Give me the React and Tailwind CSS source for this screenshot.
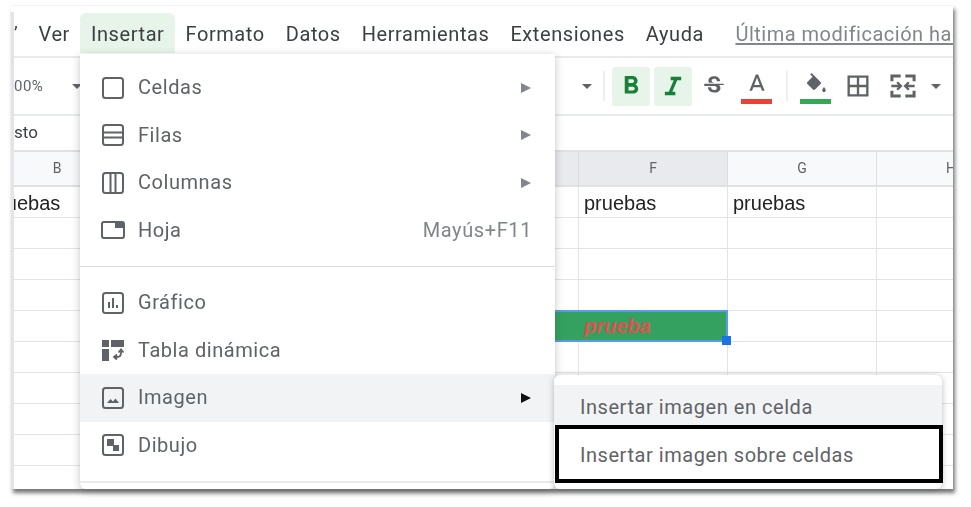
const menus = ['Ver', 'Insertar', 'Formato', 'Datos', 'Herramientas', 'Extensiones', 'Ayuda']
const columns = ['B', 'C', 'D', 'E', 'F', 'G', 'H']

const Icon = ({ children, className = 'w-6 h-6', fill = 'none' }) => (
  <svg viewBox="0 0 24 24" fill={fill} stroke={fill === 'none' ? '#5f6368' : 'none'} strokeWidth="2" className={className}>
    {children}
  </svg>
)

const menuGroups = [
  [
    { label: 'Celdas', arrow: true, icon: <rect x="2" y="2" width="20" height="20" rx="2.5" /> },
    { label: 'Filas', arrow: true, icon: <><rect x="2" y="2" width="20" height="20" rx="2.5" /><path d="M2 9.500h20M2 14.500h20" /></> },
    { label: 'Columnas', arrow: true, icon: <><rect x="2" y="2" width="20" height="20" rx="2.5" /><path d="M9.500 2v20M14.500 2v20" /></> },
    {
      label: 'Hoja',
      shortcut: 'Mayús+F11',
      icon: <><rect x="1" y="4" width="22" height="16" rx="2" /><path d="M14 4h9v6h-9z" fill="#5f6368" stroke="none" /></>,
    },
  ],
  [
    {
      label: 'Gráfico',
      icon: <><rect x="2" y="2" width="20" height="20" rx="2.5" /><path d="M8 11v6M12 7v10M16 14v3" /></>,
    },
    {
      label: 'Tabla dinámica',
      icon: (
        <>
          <path d="M1 2h7v7H1zM10 2h13v7H10zM1 11h7v12H1z" fill="#5f6368" stroke="none" />
          <path d="M20 13v2c0 3-1.500 4-4 4h-2" strokeWidth="1.8" />
          <path d="M17.500 14.500 20 11.500l2.500 3M16 16.500 13 19l3 2.500" strokeWidth="1.8" />
        </>
      ),
    },
    {
      label: 'Imagen',
      arrow: true,
      dark: true,
      active: true,
      icon: <><rect x="2" y="2" width="20" height="20" rx="2.5" /><path d="M6 17l3.500-4 2.500 2.500 2.500-3L18 17z" fill="#5f6368" stroke="none" /></>,
    },
    {
      label: 'Dibujo',
      icon: <><rect x="2" y="2" width="20" height="20" rx="2.5" /><path d="M6 6h7v7H6zM12 12h6v6h-6z" fill="#5f6368" stroke="none" /></>,
    },
  ],
]

function MenuRow({ item }) {
  return (
    <div className={`flex h-[47.5px] items-center pl-[21px] pr-[21px] ${item.active ? 'bg-[#f1f3f4]' : ''}`}>
      <Icon className="h-[24px] w-[24px] shrink-0">{item.icon}</Icon>
      <span className="ml-[13px] -mt-px text-[20px] tracking-[0.55px] text-[#5f6368]">{item.label}</span>
      {item.shortcut && <span className="ml-auto pr-[2px] text-[20px] tracking-[0.6px] text-[#80868b]">{item.shortcut}</span>}
      {item.arrow && (
        <span className={`ml-auto mr-[3px] h-0 w-0 border-y-[5px] border-l-[10px] border-y-transparent ${item.dark ? 'border-l-[#111111]' : 'border-l-[#80868b]'}`} />
      )}
    </div>
  )
}

function InsertMenu() {
  return (
    <div className="absolute left-[69px] top-[48px] flex h-[435px] w-[475px] flex-col rounded-b-md bg-white pt-[10px] shadow-[0_2px_8px_rgba(60,64,67,0.3)]">
      {menuGroups[0].map((item) => <MenuRow key={item.label} item={item} />)}
      <div className="my-[12px] h-px bg-[#dadce0]" />
      {menuGroups[1].map((item) => <MenuRow key={item.label} item={item} />)}
      <div className="mt-[12px] h-[2px] bg-[#e8eaed]" />
    </div>
  )
}

function ImageSubmenu() {
  return (
    <div className="absolute left-[543px] top-[369px] flex h-[114px] w-[388px] flex-col rounded-md bg-white pt-[10px] shadow-[0_1px_6px_rgba(60,64,67,0.35)]">
      <div className="flex h-[40px] items-center bg-[#f1f3f4] pl-[26px] pt-[4px] text-[20px] tracking-[0.55px] text-[#5f6368]">
        Insertar imagen en celda
      </div>
      <div className="absolute left-[1px] top-[50px] flex h-[58px] w-[388px] items-center border-[4px] border-black bg-white pl-[21px] pt-px text-[20px] tracking-[0.55px] text-[#5f6368]">
        Insertar imagen sobre celdas
      </div>
    </div>
  )
}

function Caret() {
  return <span className="block h-0 w-0 border-x-[5.5px] border-t-[5.5px] border-x-transparent border-t-[#5f6368]" />
}

function Toolbar() {
  return (
    <div className="flex h-[58px] items-center justify-between border-b-2 border-[#e8eaed] pr-[12px]">
      <div className="flex w-[68px] items-center justify-between">
        <span className="text-[15px] tracking-[0.5px] text-[#5f6368]">00%</span>
        <Caret />
      </div>
      <div className="flex items-center">
        <Caret />
        <div className="ml-[11px] mr-[7px] h-[30px] w-[2px] bg-[#eceef0]" />
        <button className="flex h-[39px] w-[38px] items-center justify-center rounded-[3px] bg-[#e6f4ea]">
          <Icon className="h-[30px] w-[30px]" fill="#188038">
            <path d="M15.6 10.79c.97-.67 1.65-1.77 1.65-2.79 0-2.26-1.75-4-4-4H7v14h7.04c2.09 0 3.71-1.7 3.71-3.79 0-1.52-.86-2.82-2.15-3.42zM10 6.5h3c.83 0 1.5.67 1.5 1.5s-.67 1.5-1.5 1.5h-3v-3zm3.5 9H10v-3h3.5c.83 0 1.5.67 1.5 1.5s-.67 1.5-1.5 1.5z" />
          </Icon>
        </button>
        <button className="ml-[4px] flex h-[39px] w-[38px] items-center justify-center rounded-[3px] bg-[#e6f4ea]">
          <Icon className="h-[28px] w-[28px]" fill="#188038">
            <path d="M10 4v3h2.600l-4.200 10H5v3h9v-3h-2.600l4.200-10H19V4z" />
          </Icon>
        </button>
        <span className="ml-[9px] flex w-[26px] justify-center">
          <Icon className="h-[26px] w-[26px]" fill="#5f6368">
            <path d="M6.85 7.08C6.85 4.37 9.45 3 12.24 3c1.64 0 3 .49 3.9 1.28.77.65 1.46 1.73 1.46 3.24h-3.01c0-.31-.05-.59-.15-.85-.29-.86-1.2-1.28-2.25-1.28-1.86 0-2.34 1.02-2.34 1.7 0 .48.25.88.74 1.21.38.25.77.48 1.41.7H7.39c-.21-.34-.54-.89-.54-1.92zM21 12v-2H3v2h9.62c1.15.45 1.96.75 1.96 1.97 0 1-.81 1.67-2.28 1.67-1.54 0-2.93-.54-2.93-2.51H6.4c0 .55.08 1.13.24 1.58.81 2.29 3.22 3.3 5.67 3.3 2.35 0 5.59-.92 5.59-4.04 0-.53-.02-1.99-1.3-2.97H21z" />
          </Icon>
        </span>
        <span className="ml-[14px] flex w-[31px] flex-col items-center pt-[3px]">
          <Icon className="h-[28px] w-[28px]" fill="#5f6368">
            <path d="M11 3L5.5 17h2.25l1.12-3h6.25l1.12 3h2.25L13 3h-2zm-1.38 9L12 5.67 14.38 12H9.62z" />
          </Icon>
          <span className="h-[5px] w-[31px] bg-[#ea4335]" />
        </span>
        <div className="ml-[14px] mr-[12px] h-[30px] w-[2px] bg-[#eceef0]" />
        <span className="flex w-[31px] flex-col items-center pt-[3px]">
          <span className="flex h-[28px] w-[24px] items-center">
            <Icon className="h-[24px] w-[24px]" fill="#5f6368">
              <path d="M16.56 8.94 7.62 0 6.21 1.41l2.38 2.38-5.15 5.15c-.59.59-.59 1.54 0 2.12l5.5 5.5c.29.29.68.44 1.06.44s.77-.15 1.06-.44l5.5-5.5c.59-.58.59-1.53 0-2.12zM20 14s-1.800 2-1.800 3.200c0 1 .8 1.800 1.800 1.800s1.800-.8 1.800-1.800C21.800 16 20 14 20 14z" />
            </Icon>
          </span>
          <span className="h-[5px] w-[31px] bg-[#34a853]" />
        </span>
        <span className="ml-[13px] flex w-[28px] justify-center">
          <Icon className="h-[28px] w-[28px]" fill="#5f6368">
            <path d="M3 3v18h18V3H3zm8 16H5v-6h6v6zm0-8H5V5h6v6zm8 8h-6v-6h6v6zm0-8h-6V5h6v6z" />
          </Icon>
        </span>
        <span className="ml-[17px] flex w-[28px] justify-center">
          <Icon className="h-[28px] w-[28px]">
            <path d="M2.500 8V3.500h7.500M21.500 8V3.500H14M2.500 16v4.500h7.500M21.500 16v4.500H14" strokeWidth="2.600" />
            <path d="M2 12h8M7 8.800l3.200 3.200L7 15.200M22 12h-8M17 8.800 13.800 12l3.200 3.200" strokeWidth="2" />
          </Icon>
        </span>
        <span className="ml-[14px]"><Caret /></span>
      </div>
    </div>
  )
}

function Cell({ children }) {
  return (
    <div className="flex h-full w-[149px] shrink-0 items-center border-r border-[#e2e3e3] pl-[5px] pt-[2px] font-['Liberation_Sans',sans-serif] text-[20px]">
      {children}
    </div>
  )
}

function Sheet() {
  const rows = [0, 1, 2, 3, 4, 5, 6, 7, 8, 9]
  return (
    <div className="min-h-0 flex-1 overflow-hidden">
      <div className="-ml-[31px] flex h-[35px] w-[1043px] border-b-2 border-[#dfe1e3] bg-[#f8f9fa]">
        {columns.map((c) => (
          <div
            key={c}
            className={`flex w-[149px] items-center justify-center border-r border-[#dadce0] text-[14px] text-[#5f6368] ${c === 'E' || c === 'F' ? 'bg-[#e8eaed]' : ''}`}
          >
            {c}
          </div>
        ))}
      </div>
      {rows.map((r) => (
        <div key={r} className="-ml-[31px] flex h-[31px] w-[1043px] border-b border-[#e2e3e3]">
          {r === 4 ? (
            <>
              <Cell /><Cell /><Cell />
              <div className="relative -mt-px flex h-[32px] w-[298px] shrink-0 items-center border-y-2 border-r-2 border-[#5a9ae8] bg-[#34a160] pl-[154px] font-['Liberation_Sans',sans-serif] text-[20px] font-bold italic text-[#e0504f]">
                prueba
                <span className="absolute -bottom-[5px] -right-[5px] h-[9px] w-[9px] bg-[#1a73e8]" />
              </div>
              <Cell /><Cell />
            </>
          ) : (
            columns.map((c) => (
              <Cell key={c}>{r === 0 && (c === 'B' || c === 'F' || c === 'G') ? <span className="text-[#222222]">pruebas</span> : null}</Cell>
            ))
          )}
        </div>
      ))}
    </div>
  )
}

export default function App() {
  return (
    <div className="h-[507px] w-[971px] overflow-hidden bg-white pl-[11px] pt-[5px] font-['Roboto',sans-serif]">
      <div className="relative flex h-[484px] w-[942px] flex-col border-t border-[#f3f3f3] bg-white pl-[3px] shadow-[2px_4px_4px_#777777] blur-[0.4px]">
        <div className="absolute bottom-0 left-0 top-[6px] w-[3px] bg-[#e3e4e6]" />
        <div className="flex h-[52px] items-end overflow-hidden border-b-2 border-[#e8eaed] pb-[3px]">
          <span className="w-[14px] shrink-0 self-center pt-[8px] text-[18px] text-[#3c4043]">
            <span className="block w-[4px] overflow-hidden">’</span>
          </span>
          {menus.map((m) => (
            <div
              key={m}
              className={`flex h-[40px] shrink-0 items-center px-[10.5px] pt-[2px] text-[20px] tracking-[0.58px] text-[#3c4043] ${m === 'Insertar' ? 'rounded-t-md bg-[#e6f4ea]' : ''}`}
            >
              {m}
            </div>
          ))}
          <span className="ml-[21px] flex h-[40px] shrink-0 items-center pt-[2px] text-[20px] tracking-[0.5px] text-[#80868b] underline underline-offset-2">
            Última modificación hace
          </span>
        </div>
        <Toolbar />
        <div className="flex h-[36px] items-center border-b-2 border-[#dfe1e3] text-[17px] text-[#3c4043]">sto</div>
        <Sheet />
        <InsertMenu />
        <ImageSubmenu />
      </div>
    </div>
  )
}
